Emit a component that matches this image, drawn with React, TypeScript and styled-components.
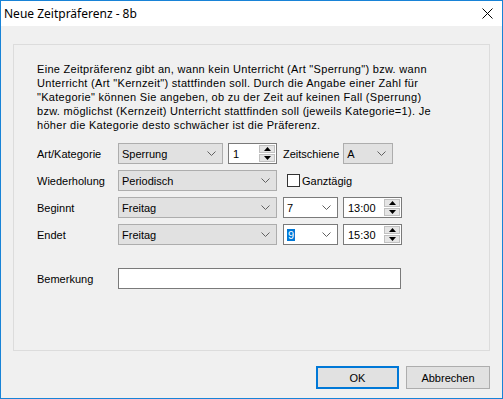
import React from 'react';
import styled, { createGlobalStyle } from 'styled-components';

const GlobalStyle = createGlobalStyle`
  html, body {
    margin: 0;
    padding: 0;
    background: #ffffff;
  }
  * {
    box-sizing: border-box;
  }
`;

const Window = styled.div`
  width: 503px;
  height: 399px;
  border: 1px solid #1883d7;
  display: flex;
  flex-direction: column;
  font-family: 'Liberation Sans', Arial, sans-serif;
  font-size: 11px;
  color: #000;
`;

const TitleBar = styled.div`
  height: 25px;
  background: #ffffff;
  display: flex;
  align-items: center;
  justify-content: space-between;
  padding: 0 9px 0 3px;
  font-family: 'Noto Sans', 'Open Sans', sans-serif;
  font-size: 12px;
`;

const Body = styled.div`
  flex: 1;
  background: #f0f0f0;
  padding: 18px 12px 0 12px;
  display: flex;
  flex-direction: column;
`;

const Panel = styled.div`
  width: 477px;
  height: 307px;
  border: 1px solid #dcdcdc;
  padding: 17px 0 0 23px;
  display: flex;
  flex-direction: column;
`;

const Description = styled.p`
  margin: 0;
  line-height: 14px;
  letter-spacing: 0.3px;
  white-space: nowrap;
`;

const Form = styled.div`
  margin-top: 11px;
  display: flex;
  flex-direction: column;
  gap: 6px;
`;

const Row = styled.div<{ $mt?: number }>`
  display: flex;
  align-items: center;
  height: 21px;
  margin-top: ${(p) => p.$mt ?? 0}px;
`;

const Label = styled.span<{ $w?: number; $ml?: number }>`
  width: ${(p) => (p.$w ? `${p.$w}px` : 'auto')};
  margin-left: ${(p) => p.$ml ?? 0}px;
  flex-shrink: 0;
`;

const Combo = styled.div<{ $w: number; $ml?: number; $editable?: boolean }>`
  width: ${(p) => p.$w}px;
  height: 21px;
  margin-left: ${(p) => p.$ml ?? 0}px;
  background: ${(p) => (p.$editable ? '#ffffff' : '#e1e1e1')};
  border: 1px solid ${(p) => (p.$editable ? '#7a7a7a' : '#adadad')};
  display: flex;
  align-items: center;
  justify-content: space-between;
  padding: 0 6px 0 3px;
  flex-shrink: 0;
`;

const Spinner = styled.div<{ $w: number; $ml?: number }>`
  width: ${(p) => p.$w}px;
  height: 21px;
  margin-left: ${(p) => p.$ml ?? 0}px;
  background: #ffffff;
  border: 1px solid #7a7a7a;
  display: flex;
  align-items: center;
  justify-content: space-between;
  padding: 1px 1px 1px 4px;
  flex-shrink: 0;
`;

const SpinButtons = styled.div`
  width: 16px;
  height: 100%;
  display: flex;
  flex-direction: column;
  gap: 1px;
`;

const SpinButton = styled.div`
  flex: 1;
  background: #e5e5e5;
  border: 1px solid #c0c0c0;
  display: flex;
  align-items: center;
  justify-content: center;
`;

const CheckBox = styled.span<{ $ml?: number }>`
  width: 13px;
  height: 13px;
  margin-left: ${(p) => p.$ml ?? 0}px;
  background: #ffffff;
  border: 1px solid #333333;
  margin-right: 2px;
  flex-shrink: 0;
`;

const TextInput = styled.div`
  width: 283px;
  height: 21px;
  background: #ffffff;
  border: 1px solid #7a7a7a;
`;

const Selected = styled.span`
  background: #0078d7;
  color: #ffffff;
  padding: 0 1px;
`;

const Footer = styled.div`
  display: flex;
  justify-content: flex-end;
  gap: 7px;
  margin-top: 15px;
`;

const Button = styled.div<{ $default?: boolean }>`
  width: ${(p) => (p.$default ? 83 : 84)}px;
  height: 23px;
  background: #e1e1e1;
  border: ${(p) => (p.$default ? '2px solid #0078d7' : '1px solid #adadad')};
  display: flex;
  align-items: center;
  justify-content: center;
`;

const Chevron = () => (
  <svg width="9" height="5" viewBox="0 0 9 5">
    <polyline points="0.5,0.5 4.5,4.5 8.5,0.5" fill="none" stroke="#606060" strokeWidth="1" />
  </svg>
);

const Arrow = ({ up }: { up?: boolean }) => (
  <svg width="7" height="4" viewBox="0 0 7 4">
    <polygon points={up ? '0,4 3.5,0 7,4' : '0,0 3.5,4 7,0'} fill="#000" />
  </svg>
);

const Spin = ({ value, w, ml }: { value: string; w: number; ml?: number }) => (
  <Spinner $w={w} $ml={ml}>
    <span>{value}</span>
    <SpinButtons>
      <SpinButton>
        <Arrow up />
      </SpinButton>
      <SpinButton>
        <Arrow />
      </SpinButton>
    </SpinButtons>
  </Spinner>
);

const Select = ({
  children,
  w,
  ml,
  editable,
}: {
  children: React.ReactNode;
  w: number;
  ml?: number;
  editable?: boolean;
}) => (
  <Combo $w={w} $ml={ml} $editable={editable}>
    <span>{children}</span>
    <Chevron />
  </Combo>
);

const App = () => {
  return (
    <>
      <GlobalStyle />
      <Window>
        <TitleBar>
          <span>Neue Zeitpräferenz - 8b</span>
          <svg width="11" height="11" viewBox="0 0 11 11">
            <path d="M0.5,0.5 L10.5,10.5 M10.5,0.5 L0.5,10.5" stroke="#000" strokeWidth="1" />
          </svg>
        </TitleBar>
        <Body>
          <Panel>
            <Description>
              Eine Zeitpräferenz gibt an, wann kein Unterricht (Art "Sperrung") bzw. wann
              <br />
              Unterricht (Art "Kernzeit") stattfinden soll. Durch die Angabe einer Zahl für
              <br />
              "Kategorie" können Sie angeben, ob zu der Zeit auf keinen Fall (Sperrung)
              <br />
              bzw. möglichst (Kernzeit) Unterricht stattfinden soll (jeweils Kategorie=1). Je
              <br />
              höher die Kategorie desto schwächer ist die Präferenz.
            </Description>
            <Form>
              <Row>
                <Label $w={81}>Art/Kategorie</Label>
                <Select w={105}>Sperrung</Select>
                <Spin value="1" w={49} ml={5} />
                <Label $ml={6}>Zeitschiene</Label>
                <Select w={50} ml={4}>A</Select>
              </Row>
              <Row>
                <Label $w={81}>Wiederholung</Label>
                <Select w={159}>Periodisch</Select>
                <CheckBox $ml={10} />
                <span>Ganztägig</span>
              </Row>
              <Row>
                <Label $w={81}>Beginnt</Label>
                <Select w={159}>Freitag</Select>
                <Select w={55} ml={6} editable>
                  7
                </Select>
                <Spin value="13:00" w={59} ml={5} />
              </Row>
              <Row>
                <Label $w={81}>Endet</Label>
                <Select w={159}>Freitag</Select>
                <Select w={55} ml={6} editable>
                  <Selected>9</Selected>
                </Select>
                <Spin value="15:30" w={59} ml={5} />
              </Row>
              <Row $mt={17}>
                <Label $w={81}>Bemerkung</Label>
                <TextInput />
              </Row>
            </Form>
          </Panel>
          <Footer>
            <Button $default>OK</Button>
            <Button>Abbrechen</Button>
          </Footer>
        </Body>
      </Window>
    </>
  );
};

export default App;
